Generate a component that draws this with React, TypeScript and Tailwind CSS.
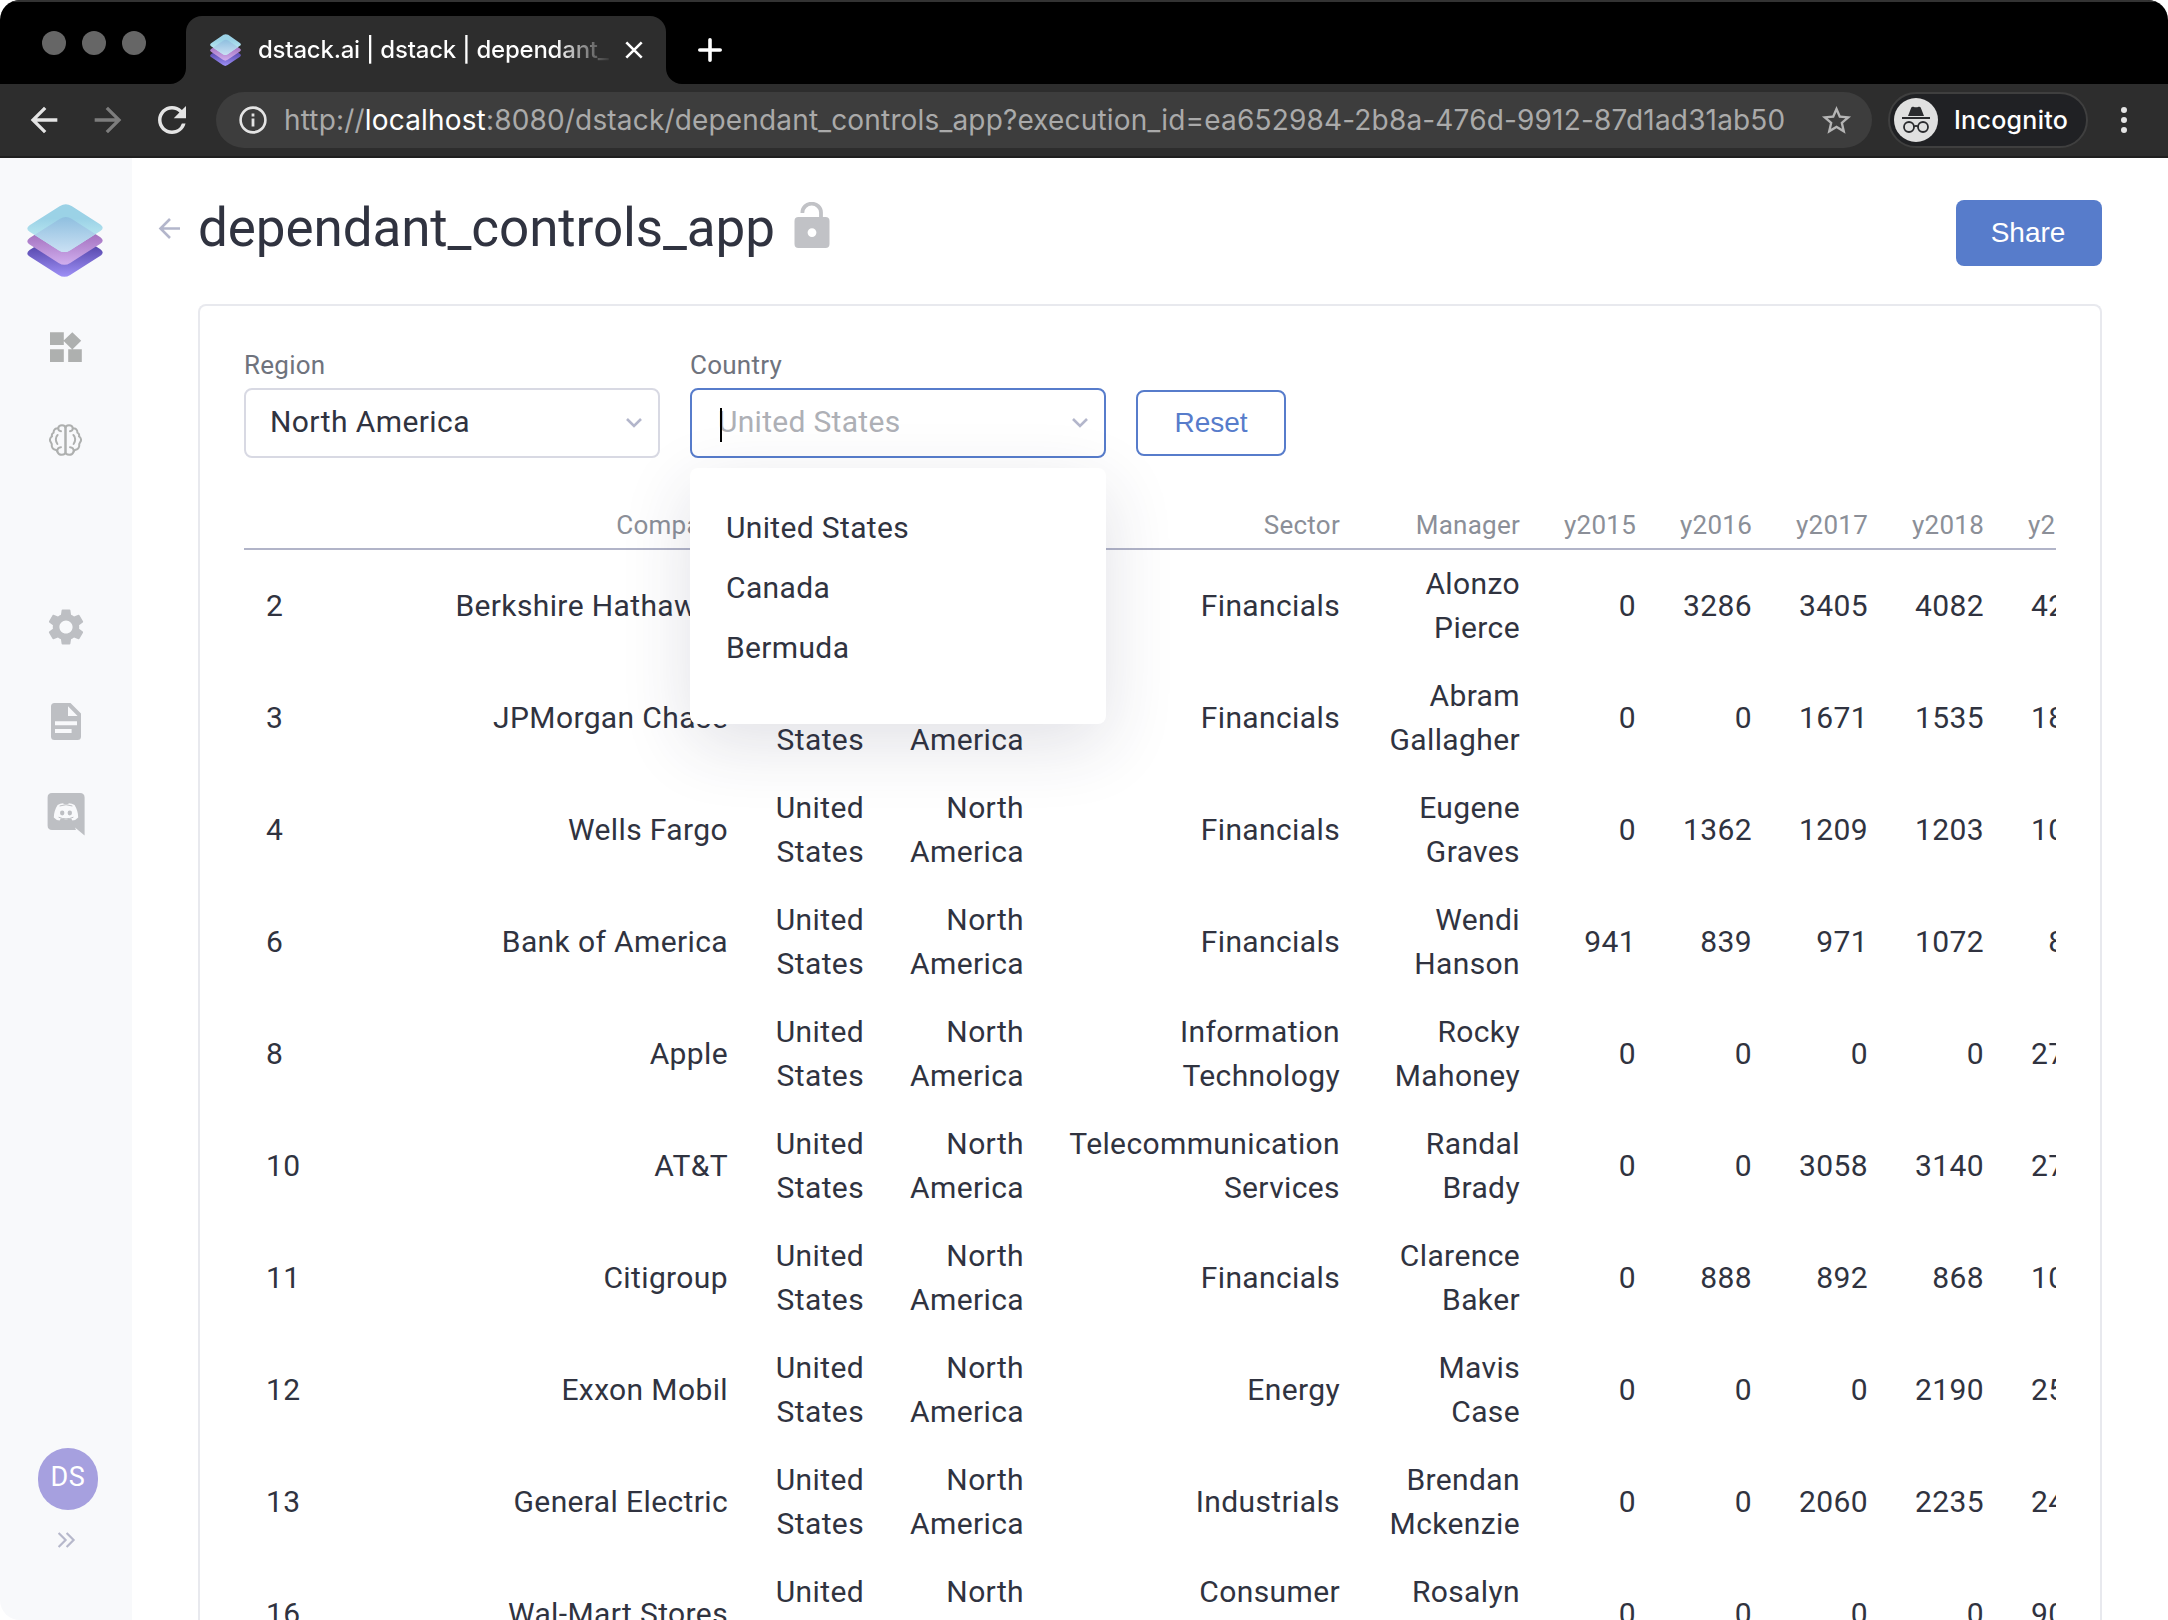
import React from "react";
import { MdArrowBack, MdArrowForward, MdRefresh, MdSettings, MdStarBorder } from "react-icons/md";

const RHOMB =
  "M33 2 Q38.8 -1.4 44.6 2 L73.4 20.6 Q78 23.9 73.4 27.2 L43.2 46.4 Q37.4 50.2 31.6 46.4 L2.6 28 Q-2 24.8 2.6 21.4 Z";

function StackLogo({ className, id }: { className: string; id: string }) {
  return (
    <svg className={className} viewBox="0 0 76 73.4" preserveAspectRatio="none">
      <defs>
        <linearGradient id={id + "a"} x1="0" y1="0" x2="0" y2="1">
          <stop offset="0.3" stopColor="#9bd2e6" />
          <stop offset="0.75" stopColor="#bdeaf2" />
        </linearGradient>
        <linearGradient id={id + "b"} x1="0" y1="0" x2="0" y2="1">
          <stop offset="0.35" stopColor="#a472bf" />
          <stop offset="1" stopColor="#d0aeee" />
        </linearGradient>
        <linearGradient id={id + "c"} x1="0" y1="0" x2="0" y2="1">
          <stop offset="0.4" stopColor="#5c4db2" />
          <stop offset="1" stopColor="#9e90f6" />
        </linearGradient>
        <linearGradient id={id + "d"} x1="0" y1="0" x2="0" y2="1">
          <stop offset="0" stopColor="#8fbfdf" />
          <stop offset="0.75" stopColor="#cbe1f4" />
        </linearGradient>
        <clipPath id={id + "k"}>
          <path d={RHOMB} />
        </clipPath>
      </defs>
      <path d={RHOMB} transform="translate(0 24.9)" fill={`url(#${id}c)`} />
      <path d={RHOMB} transform="translate(0 12.8)" fill={`url(#${id}b)`} />
      <path d={RHOMB} fill={`url(#${id}a)`} />
      <g clipPath={`url(#${id}k)`}>
        <path d={RHOMB} transform="translate(0 12.8)" fill={`url(#${id}d)`} />
      </g>
    </svg>
  );
}

function BrowserChrome() {
  return (
    <header className="h-[158px] w-full shrink-0 font-[Inter,sans-serif]">
      <div className="flex h-[84px] items-end border-t-2 border-[#333333] bg-black">
        <div className="flex h-full items-center gap-4 pl-[42px]">
          <span className="size-6 rounded-full bg-[#666666]" />
          <span className="size-6 rounded-full bg-[#666666]" />
          <span className="size-6 rounded-full bg-[#666666]" />
        </div>
        <svg className="ml-[24px] h-4 w-4" viewBox="0 0 16 16">
          <path d="M16 0V16H0A16 16 0 0 0 16 0Z" fill="#2d2d2d" />
        </svg>
        <div className="flex h-[68px] w-[480px] items-center rounded-t-[16px] bg-[#2d2d2d] pl-[24px]">
          <StackLogo id="fav" className="h-8 w-[31px]" />
          <div className="ml-[17px] w-[351px] overflow-hidden bg-linear-to-r from-white from-85% to-[#3a3a3a] bg-clip-text text-[24px] leading-8 font-medium tracking-[-0.22px] whitespace-nowrap text-transparent">
            dstack.ai | dstack | dependant_
          </div>
          <svg className="ml-[16px] size-[18px]" viewBox="0 0 18 18" stroke="#fff" strokeWidth="2.6">
            <path d="M1.3 1.3 16.7 16.7M16.7 1.3 1.3 16.7" />
          </svg>
        </div>
        <svg className="h-4 w-4" viewBox="0 0 16 16">
          <path d="M0 0V16H16A16 16 0 0 1 0 0Z" fill="#2d2d2d" />
        </svg>
        <svg className="mb-[22px] ml-[16px] size-6" viewBox="0 0 24 24" stroke="#fff" strokeWidth="3.6" strokeLinecap="round">
          <path d="M12 1.8V22.2M1.8 12H22.2" />
        </svg>
      </div>
      <div className="flex h-[74px] items-center border-b-2 border-[#1f1f1f] bg-[#2d2d2d] pl-6">
        <MdArrowBack className="size-10 text-[#e4e4e4]" />
        <MdArrowForward className="ml-6 size-10 text-[#7d7d7d]" />
        <MdRefresh className="ml-[23px] size-[42px] text-[#e4e4e4]" />
        <div className="ml-[23px] flex h-14 w-[1656px] items-center rounded-full bg-[#3d3d3d] pl-[23px]">
          <svg className="size-7 shrink-0" viewBox="0 0 28 28" fill="none" stroke="#e4e4e4">
            <circle cx="14" cy="14" r="12.4" strokeWidth="2.6" />
            <path d="M14 12.6V20.4M14 7.6V10.4" strokeWidth="2.8" />
          </svg>
          <div className="ml-[17px] w-[1521px] text-[28px] tracking-[0.17px] whitespace-nowrap text-[#aaaaaa]">
            http://<span className="text-white">localhost</span>
            :8080/dstack/dependant_controls_app?execution_id=ea652984-2b8a-476d-9912-87d1ad31ab50
          </div>
          <MdStarBorder className="ml-[14px] size-[35px] shrink-0 text-[#b5b5b5]" />
        </div>
        <div className="ml-4 flex h-14 w-[200px] items-center rounded-full border-2 border-[#3f3f3f] bg-[#202124] pl-1">
          <svg className="size-11 shrink-0" viewBox="0 0 44 44">
            <circle cx="22" cy="22" r="22" fill="#e0e0e0" />
            <path d="M14 18 L17.3 9.6 Q18 8.3 19.4 8.8 Q22 9.9 24.6 8.8 Q26 8.3 26.7 9.6 L30 18Z" fill="#2a2b2e" />
            <path d="M8 20H36" stroke="#2a2b2e" strokeWidth="2" />
            <g fill="none" stroke="#2a2b2e" strokeWidth="1.8">
              <circle cx="15" cy="29" r="5" />
              <circle cx="29" cy="29" r="5" />
              <path d="M20 28.4Q22 27.2 24 28.4" />
            </g>
          </svg>
          <span className="mt-0.5 ml-[16px] text-[25px] font-medium tracking-[0.3px] text-white">Incognito</span>
        </div>
        <div className="ml-[33px] flex flex-col gap-1">
          <span className="size-1.5 rounded-full bg-[#e4e4e4]" />
          <span className="size-1.5 rounded-full bg-[#e4e4e4]" />
          <span className="size-1.5 rounded-full bg-[#e4e4e4]" />
        </div>
      </div>
    </header>
  );
}

function Sidebar() {
  return (
    <aside className="flex w-[132px] shrink-0 flex-col bg-[#f8f9fb] pt-[46px]">
      <StackLogo id="logo" className="ml-[27px] h-[73px] w-[76px]" />
      <svg className="mt-[55px] ml-[50px] h-[30px] w-8" viewBox="0 0 32 30" fill="#aeb0af">
        <path d="M0 .3H13.8V13H0ZM0 17.2H13.8V30H0ZM18.2 17.2H31.8V30H18.2ZM22.3 .2 31.2 8.8 22.3 17.4 13.4 8.8Z" />
      </svg>
      <svg
        className="mt-[62px] ml-[49px] h-8 w-[33px]"
        viewBox="0 0 33 32"
        fill="none"
        stroke="#aeb0af"
        strokeWidth="2"
        strokeLinecap="round"
        strokeLinejoin="round"
      >
        <path d="M16.5 4.4C16.5 2.4 15 1.2 13 1.2C10.8 1.2 9.4 2.4 9.2 4.2C6.6 3.9 4.4 5.8 4.6 8.6C2.8 9.4 2.6 11 3 12.4C.8 13.6.4 16.4 1.8 18.2C2.2 19 2.6 19.4 2.8 20.2C2.4 23.2 4 25.4 7 26C7.8 26.2 8 27 8.4 27.8C9.2 30 11 30.8 12.8 30.8C15 30.8 16.5 29.6 16.5 27.6Z" />
        <path d="M16.5 4.4C16.5 2.4 18 1.2 20 1.2C22.2 1.2 23.6 2.4 23.8 4.2C26.4 3.9 28.6 5.8 28.4 8.6C30.2 9.4 30.4 11 30 12.4C32.2 13.6 32.6 16.4 31.2 18.2C30.8 19 30.4 19.4 30.2 20.2C30.6 23.2 29 25.4 26 26C25.2 26.2 25 27 24.6 27.8C23.8 30 22 30.8 20.2 30.8C18 30.8 16.5 29.6 16.5 27.6Z" />
        <path d="M9.2 4.2C9.2 5.8 10.2 7 12 7.2M8.6 11C6.4 13 6.2 17 8.4 20M8.4 27.4C8 25 9.4 23.4 12 23.2M23.8 4.2C23.8 5.8 22.8 7 21 7.2M24.4 11C26.6 13 26.8 17 24.6 20M24.6 27.4C25 25 23.6 23.4 21 23.2" />
      </svg>
      <MdSettings className="mt-[149px] ml-[44px] size-[44px] text-[#bdbfc3]" />
      <svg className="mt-[54px] ml-[51px] h-[37px] w-[30px]" viewBox="0 0 30 37" fill="#bdbfc3">
        <path
          fillRule="evenodd"
          d="M3.5 0H19.5L30 10.6V33.5Q30 37 26.5 37H3.5Q0 37 0 33.5V3.5Q0 0 3.5 0ZM17 3.2V13H26.6ZM4 18.2V22.2H26V18.2ZM4 26V30H20.6V26Z"
        />
      </svg>
      <svg className="mt-[53px] ml-[47px] h-[43px] w-[38px]" viewBox="0 0 38 43">
        <path d="M5 0H33Q37.6 0 37.6 4.6V42.6L28 34.4L29 37H5Q.6 37 .6 32.6V4.6Q.6 0 5 0Z" fill="#bdbfc3" />
        <path
          d="M10.6 12Q13 10.3 16.2 10.2L16.8 11.2Q19 10.9 21.2 11.2L21.8 10.2Q25 10.3 27.6 12Q31.2 18 31.2 24.6Q29 27.4 25.4 27.4L24.2 25.6Q19 27.2 13.8 25.6L12.6 27.4Q9 27.4 6.8 24.6Q6.8 18 10.6 12Z"
          fill="#f8f9fb"
        />
        <path d="M11.6 24.2Q19 27.6 26.4 24.2M12.6 13Q19 10.4 25.4 13" fill="none" stroke="#bdbfc3" strokeWidth="1" />
        <ellipse cx="15.2" cy="20" rx="2.2" ry="2.4" fill="#bdbfc3" />
        <ellipse cx="22.8" cy="20" rx="2.2" ry="2.4" fill="#bdbfc3" />
      </svg>
      <div className="mt-auto ml-[38px] flex h-[62px] w-[60px] items-center justify-center rounded-full bg-[#a6a0df] pb-[3px] text-[27px] tracking-[0.6px] text-white">
        DS
      </div>
      <svg className="mt-[22px] mb-[72px] ml-[57px] h-4 w-[19px]" viewBox="0 0 19 16" fill="none" stroke="#b6b8cb" strokeWidth="2.2">
        <path d="M1.6 1 8.6 8 1.6 15M9.6 1 16.6 8 9.6 15" />
      </svg>
    </aside>
  );
}

function Chevron() {
  return (
    <svg className="h-[10px] w-4" viewBox="0 0 16 10" fill="none" stroke="#b3b6cb" strokeWidth="2.6">
      <path d="M1 1 8 8 15 1" />
    </svg>
  );
}

const HEADERS = ["Company", "Country", "Region", "Sector", "Manager", "y2015", "y2016", "y2017", "y2018", "y2019"];

type Row = [string, string, string[], string[], string[]];

const ROWS: Row[] = [
  ["2", "Berkshire Hathaway", ["Financials"], ["Alonzo", "Pierce"], ["0", "3286", "3405", "4082", "4294"]],
  ["3", "JPMorgan Chase", ["Financials"], ["Abram", "Gallagher"], ["0", "0", "1671", "1535", "1866"]],
  ["4", "Wells Fargo", ["Financials"], ["Eugene", "Graves"], ["0", "1362", "1209", "1203", "1040"]],
  ["6", "Bank of America", ["Financials"], ["Wendi", "Hanson"], ["941", "839", "971", "1072", "886"]],
  ["8", "Apple", ["Information", "Technology"], ["Rocky", "Mahoney"], ["0", "0", "0", "0", "2723"]],
  ["10", "AT&T", ["Telecommunication", "Services"], ["Randal", "Brady"], ["0", "0", "3058", "3140", "2740"]],
  ["11", "Citigroup", ["Financials"], ["Clarence", "Baker"], ["0", "888", "892", "868", "1040"]],
  ["12", "Exxon Mobil", ["Energy"], ["Mavis", "Case"], ["0", "0", "0", "2190", "2540"]],
  ["13", "General Electric", ["Industrials"], ["Brendan", "Mckenzie"], ["0", "0", "2060", "2235", "2440"]],
  ["16", "Wal-Mart Stores", ["Consumer", "\u00a0"], ["Rosalyn", "\u00a0"], ["0", "0", "0", "0", "9040"]],
];

function Lines({ lines }: { lines: string[] }) {
  return (
    <td className="px-[22px]">
      {lines.map((l) => (
        <div key={l}>{l}</div>
      ))}
    </td>
  );
}

function DataTable() {
  return (
    <div className="mt-[46px] w-[1812px] overflow-hidden">
      <div className="h-[46px] w-full border-b-2 border-[#b1b4c8]" />
      <table className="-mt-[46px] w-[1878px] table-fixed border-collapse text-right text-[30px] leading-[44px] tracking-[0.38px]">
        <colgroup>
          <col className="w-[80px]" />
          <col className="w-[426px]" />
          <col className="w-[136px]" />
          <col className="w-[160px]" />
          <col className="w-[316px]" />
          <col className="w-[180px]" />
          <col className="w-[116px]" />
          <col className="w-[116px]" />
          <col className="w-[116px]" />
          <col className="w-[116px]" />
          <col className="w-[116px]" />
        </colgroup>
        <thead>
          <tr className="h-[46px] text-[26px] leading-[42px] tracking-[0.25px] text-[#8b8f98]">
            <th />
            {HEADERS.map((h) => (
              <th key={h} className="px-[22px] pb-1 font-normal">
                {h}
              </th>
            ))}
          </tr>
        </thead>
        <tbody>
          {ROWS.map(([id, company, sector, manager, years]) => (
            <tr key={id} className="h-[112px]">
              <td className="pl-[22px] text-left">{id}</td>
              <td className="px-[22px]">{company}</td>
              <Lines lines={["United", "States"]} />
              <Lines lines={["North", "America"]} />
              <Lines lines={sector} />
              <Lines lines={manager} />
              {years.map((y, i) => (
                <td key={i} className="px-[22px]">
                  {y}
                </td>
              ))}
            </tr>
          ))}
        </tbody>
      </table>
    </div>
  );
}

export default function App() {
  return (
    <div className="h-[1620px] w-[2168px] bg-white">
      <div className="flex h-full w-full flex-col overflow-hidden rounded-[20px] bg-white font-[Roboto,sans-serif] text-[#303340]">
        <BrowserChrome />
        <div className="flex min-h-0 flex-1">
          <Sidebar />
          <main className="flex min-w-0 flex-1 flex-col pr-[66px]">
            <div className="flex h-[146px] shrink-0 items-start pl-[26px]">
              <svg className="mt-[60px] h-[21px] w-[23px]" viewBox="0 0 23 21" fill="none" stroke="#b3b6cb" strokeWidth="2.6">
                <path d="M22 10.5H2.5M12 1 2.5 10.5 12 20" />
              </svg>
              <h1 className="mt-[38px] ml-[17px] text-[53px] leading-[64px] tracking-[-0.1px] whitespace-nowrap">
                dependant_controls_app
              </h1>
              <svg className="mt-[44px] ml-[19px] h-[46px] w-[36px]" viewBox="0 0 36 46">
                <path d="M8.4 11V10.4A9.3 8.7 0 0 1 27 10.4V18" fill="none" stroke="#c1c2c6" strokeWidth="3.8" />
                <path
                  fillRule="evenodd"
                  fill="#c1c2c6"
                  d="M4.5 15H31.5Q35.5 15 35.5 19V42Q35.5 46 31.5 46H4.5Q.5 46 .5 42V19Q.5 15 4.5 15ZM18 26.2A4.4 4.4 0 1 0 18 35A4.4 4.4 0 1 0 18 26.2Z"
                />
              </svg>
              <button className="mt-[42px] ml-auto h-[66px] w-[146px] rounded-[8px] bg-[#577ccb] pr-[2px] font-['Liberation_Sans',sans-serif] text-[28px] text-white">
                Share
              </button>
            </div>
            <section className="ml-[66px] flex min-h-0 flex-1 flex-col rounded-t-[8px] border-2 border-b-0 border-[#e8e9ee] pt-[42px] pl-[44px]">
              <div className="flex h-[110px] shrink-0 items-end gap-[30px]">
                <label className="w-[416px]">
                  <div className="h-[40px] text-[26px] leading-[34px] tracking-[0.25px] text-[#6f737d]">Region</div>
                  <div className="flex h-[70px] items-center justify-between rounded-[8px] border-2 border-[#d8d9e3] pr-[16px] pb-1 pl-6 text-[30px] tracking-[0.42px]">
                    North America
                    <span className="pt-1">
                      <Chevron />
                    </span>
                  </div>
                </label>
                <div className="relative w-[416px]">
                  <div className="h-[40px] text-[26px] leading-[34px] tracking-[0.25px] text-[#6f737d]">Country</div>
                  <div className="flex h-[70px] items-center rounded-[8px] border-2 border-[#577ccb] pr-[16px] pb-0.5 pl-[26px] text-[30px] tracking-[0.3px] text-[#aeb0b6]">
                    <span className="relative inline-block leading-[34px]">
                      United States
                      <span className="absolute top-[3px] left-[2px] h-[34px] w-0.5 bg-black" />
                    </span>
                    <span className="ml-auto pt-0.5">
                      <Chevron />
                    </span>
                  </div>
                  <ul className="absolute top-[120px] left-0 z-10 h-[256px] w-[416px] rounded-[8px] bg-white pt-[30px] pl-[36px] text-[30px] leading-[60px] tracking-[0.35px] shadow-[0_20px_70px_rgba(40,45,80,0.14)]">
                    <li>United States</li>
                    <li>Canada</li>
                    <li>Bermuda</li>
                  </ul>
                </div>
                <button className="mb-0.5 h-[66px] w-[150px] rounded-[8px] border-2 border-[#577ccb] font-['Liberation_Sans',sans-serif] text-[28px] text-[#577ccb]">
                  Reset
                </button>
              </div>
              <DataTable />
            </section>
          </main>
        </div>
      </div>
    </div>
  );
}
